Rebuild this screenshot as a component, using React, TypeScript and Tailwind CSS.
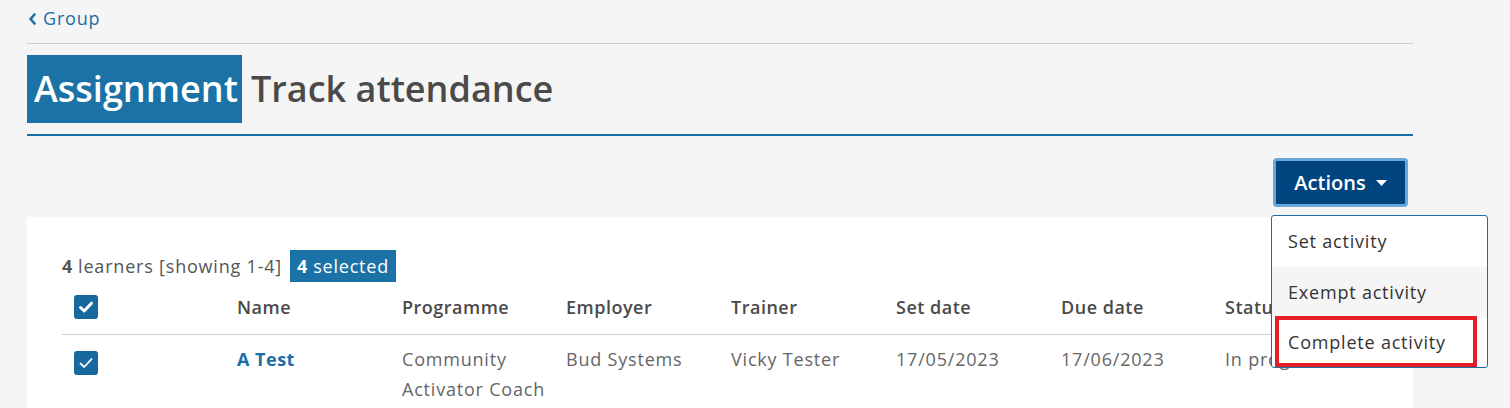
import React from 'react';

const columns = ['Name', 'Programme', 'Employer', 'Trainer', 'Set date', 'Due date', 'Status'];

function CheckBox({ bold = false }: { bold?: boolean }) {
  return (
    <span className="inline-flex h-[24px] w-[24px] items-center justify-center rounded-[3px] bg-[#17689e]">
      <svg width="16" height="16" viewBox="0 0 16 16" fill="none">
        <path
          d="M2.5 8.5 L6.2 12 L13.5 4.2"
          stroke="white"
          strokeWidth={bold ? 3 : 1.8}
          strokeLinecap="round"
          strokeLinejoin="round"
        />
      </svg>
    </span>
  );
}

export default function App() {
  return (
    <div
      className="h-[408px] w-[1510px] overflow-hidden bg-[#f5f5f5] text-[#4a4a4a]"
      style={{ fontFamily: '"Open Sans", "Noto Sans", sans-serif' }}
    >
      <div className="ml-[27px] w-[1386px]">
        {/* back link */}
        <div className="flex h-[44px] items-center gap-[6px] border-b border-[#cccccc] pb-[6px] pl-[1px] text-[18px] tracking-[0.8px] text-[#1b6ea3]">
          <svg width="9" height="12" viewBox="0 0 9 12" fill="none">
            <path d="M6.5 1.5 L2.5 6 L6.5 10.5" stroke="#1b6ea3" strokeWidth="2.6" strokeLinecap="round" strokeLinejoin="round" />
          </svg>
          <span>Group</span>
        </div>

        {/* title */}
        <div className="mt-[11px] flex items-center gap-[9px] border-b-2 border-[#1b6ea3] pb-[11px]">
          <span className="flex h-[68px] items-center bg-[#1b72a6] pl-[7px] pr-[4px] text-[36px] font-semibold text-white">
            Assignment
          </span>
          <span className="text-[36px] font-semibold text-[#4a4a4a]">Track attendance</span>
        </div>

        {/* actions */}
        <div className="mt-[22px] flex justify-end pr-[5px]">
          <div className="relative">
            <button className="flex h-[49px] w-[135px] items-center justify-center gap-[10px] rounded-[4px] border-[3px] border-[#68a8d8] bg-[#00457f] text-[20px] font-semibold text-white">
              Actions
              <svg width="11" height="6" viewBox="0 0 11 6">
                <path d="M0 0 L11 0 L5.5 6 Z" fill="white" />
              </svg>
            </button>
            <div className="absolute left-[-2px] top-[57px] z-10 w-[217px] rounded-[3px] border border-[#1b6ea3] bg-white text-[18px] tracking-[0.8px] text-[#333333]">
              <div className="flex h-[51px] items-center pl-[16px]">Set activity</div>
              <div className="flex h-[50px] items-center bg-[#f5f5f5] pl-[16px]">Exempt activity</div>
              <div className="relative flex h-[50px] items-center pl-[16px]">
                Complete activity
                <div className="absolute bottom-[0px] left-[3px] right-[10px] top-[-1px] border-[4px] border-[#e41e26]" />
              </div>
            </div>
          </div>
        </div>

        {/* card */}
        <div className="mt-[10px] h-[300px] bg-white px-[35px] pt-[33px]">
          <div className="flex items-center text-[18px] tracking-[0.8px] text-[#555555]">
            <span className="font-bold">4</span>
            <span className="ml-[5px]">learners [showing 1-4]</span>
            <span className="ml-[8px] flex h-[32px] items-center bg-[#1b72a6] px-[7px] text-white">
              <span className="font-bold">4</span>
              <span className="ml-[5px]">selected</span>
            </span>
          </div>

          <div className="mt-[10px] grid grid-cols-[175px_165px_164px_165px_165px_165px_164px_1fr] border-b border-[#cccccc] pb-[12px] text-[18px] font-semibold tracking-[0.5px] text-[#4a4a4a]">
            <div className="pl-[12px] pt-[3px]">
              <CheckBox bold />
            </div>
            {columns.map((c) => (
              <div key={c} className="flex items-center">
                {c}
              </div>
            ))}
          </div>

          <div className="grid grid-cols-[175px_165px_164px_165px_165px_165px_164px_1fr] pt-[9px] text-[18px] leading-[30px] tracking-[0.8px] text-[#666666]">
            <div className="pl-[12px] pt-[5px]">
              <CheckBox />
            </div>
            <div className="font-bold tracking-[0.5px] text-[#1b6ea3]">A Test</div>
            <div>
              Community
              <br />
              Activator Coach
            </div>
            <div>Bud Systems</div>
            <div>Vicky Tester</div>
            <div>17/05/2023</div>
            <div>17/06/2023</div>
            <div>In progress</div>
          </div>
        </div>
      </div>
    </div>
  );
}
